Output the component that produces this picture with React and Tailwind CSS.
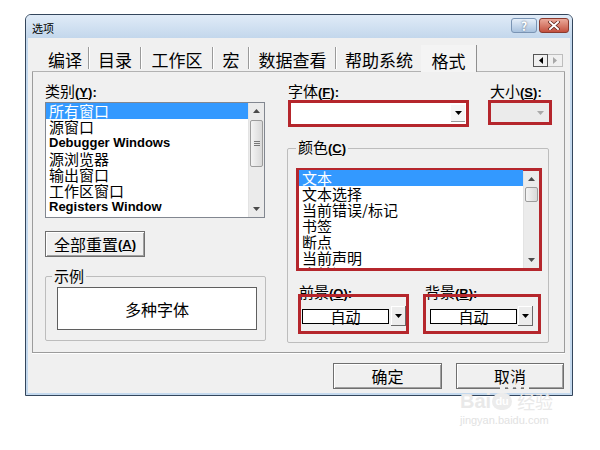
import React from 'react';

const cjk = "font-['Noto_Sans_CJK_SC','Liberation_Sans',sans-serif]";
const latinBold = "font-['Liberation_Sans',sans-serif] font-bold";

const Tri = ({ dir = 'down', color = '#000', w = 7, h = 4 }) => {
  const pts = {
    down: `0,0 ${w},0 ${w / 2},${h}`,
    up: `0,${h} ${w},${h} ${w / 2},0`,
  };
  if (dir === 'left' || dir === 'right') {
    const p = dir === 'left' ? `${h},0 ${h},${w} 0,${w / 2}` : `0,0 0,${w} ${h},${w / 2}`;
    return (
      <svg width={h} height={w} viewBox={`0 0 ${h} ${w}`}>
        <polygon points={p} fill={color} />
      </svg>
    );
  }
  return (
    <svg width={w} height={h} viewBox={`0 0 ${w} ${h}`}>
      <polygon points={pts[dir]} fill={color} />
    </svg>
  );
};

const ScrollBar = ({ thumbTop, thumbH, grip }) => (
  <div className="w-[16px] h-full flex flex-col bg-[#ebebeb] border-l border-[#e3e3e3]">
    <div className="h-[16px] flex items-center justify-center">
      <Tri dir="up" color="#4a4a4a" w={7} h={4} />
    </div>
    <div
      className={`mx-[1px] rounded-[2px] border border-[#9c9c9c] bg-linear-to-r from-[#f4f4f4] to-[#d9d9d9] flex flex-col items-center justify-center gap-[1px] ${thumbTop} ${thumbH}`}
    >
      {grip && (
        <>
          <div className="w-[6px] h-[1px] bg-[#777]" />
          <div className="w-[6px] h-[1px] bg-[#777]" />
          <div className="w-[6px] h-[1px] bg-[#777]" />
        </>
      )}
    </div>
    <div className="flex-1" />
    <div className="h-[16px] flex items-center justify-center">
      <Tri dir="down" color="#4a4a4a" w={7} h={4} />
    </div>
  </div>
);

const Row = ({ children, selected, bold }) => (
  <div
    className={`h-[16px] leading-[16px] pl-[3px] whitespace-nowrap overflow-hidden ${
      selected ? 'bg-[#3399ff] text-white' : 'text-black'
    } ${bold ? `${latinBold} text-[13px]` : 'text-[15px]'}`}
  >
    {children}
  </div>
);

const Key = ({ k, colon = true }) => (
  <span className={`${latinBold} text-[13px]`}>
    (<span className="underline">{k}</span>){colon ? ':' : ''}
  </span>
);

const Sep = () => (
  <div className="h-full flex items-end border-b border-[#b2b2b2]">
    <div className="flex mb-[2px] h-[22px]">
      <div className="w-[1px] bg-[#9a9a9a]" />
      <div className="w-[1px] bg-white" />
    </div>
  </div>
);

const Tab = ({ w, children, active }) => (
  <div
    className={`${w} h-full flex items-center justify-center pt-[3px] text-[17px] leading-none ${
      active ? 'border-r border-[#8f8f8f] bg-[#f4f4f4]' : 'border-b border-[#b2b2b2]'
    }`}
  >
    {children}
  </div>
);

const WinButton = ({ w, children }) => (
  <div
    className={`${w} h-[26px] border border-[#6f6f6f] bg-[#f0f0f0] shadow-[inset_1px_1px_0_#ffffff,inset_-1px_-1px_0_#a0a0a0] flex items-center justify-center text-[16px] leading-none`}
  >
    {children}
  </div>
);

const ColorCombo = ({ pl, ml }) => (
  <div className={`flex items-center h-full pt-[4px] ${pl}`}>
    <div className="w-[87px] h-[15px] border border-black bg-white flex items-center justify-center text-[15px] leading-none">
      自动
    </div>
    <div
      className={`${ml} w-[15px] h-[20px] bg-[#ececec] border-r border-b border-[#6a6a6a] shadow-[inset_1px_1px_0_#ffffff] flex items-center justify-center`}
    >
      <Tri color="#000" w={7} h={4} />
    </div>
  </div>
);

export default function App() {
  return (
    <div className={`w-[600px] h-[450px] bg-white relative overflow-hidden text-black ${cjk}`}>
      {/* dialog window */}
      <div className="ml-[25px] mt-[14px] w-[548px] h-[382px] border border-[#34465c] rounded-t-[6px] bg-[#c4d9ee] flex flex-col">
        {/* title bar */}
        <div className="h-[23px] flex items-start rounded-t-[5px] bg-linear-to-b from-[#e0ebf7] to-[#c3d7ec]">
          <div className="pl-[6px] h-full flex items-center pt-[3px] text-[11px] leading-none">选项</div>
          <div className="flex-1" />
          <div className="flex mt-[3px] mr-[3px] gap-[2px]">
            <div className="w-[26px] h-[15px] rounded-[3px] border border-[#7a94b4] bg-linear-to-b from-[#e6eff9] to-[#a9c2de] flex items-center justify-center text-[12px] leading-none font-bold text-white [text-shadow:0_0_2px_#4a5a70]">
              ?
            </div>
            <div className="w-[30px] h-[15px] rounded-[3px] border border-[#8a3a2e] bg-linear-to-b from-[#eaa99a] to-[#c24f3e] flex items-center justify-center">
              <svg width="12" height="9" viewBox="0 0 12 9">
                <path d="M2 1 L10 8 M10 1 L2 8" stroke="#5a1f16" strokeWidth="3.4" strokeLinecap="square" />
                <path d="M2 1 L10 8 M10 1 L2 8" stroke="#ffffff" strokeWidth="2" strokeLinecap="square" />
              </svg>
            </div>
          </div>
        </div>

        {/* client area */}
        <div className="mx-[2px] mb-[2px] flex-1 bg-[#f0f0f0] flex flex-col">
          <div className="ml-[4px] w-[533px] pt-[7px] flex flex-col">
            {/* tabs */}
            <div className="h-[27px] flex">
              <div className="w-[10px] border-b border-[#b2b2b2]" />
              <Tab w="w-[46px]">编译</Tab>
              <Sep />
              <Tab w="w-[50px]">目录</Tab>
              <Sep />
              <Tab w="w-[70px]">工作区</Tab>
              <Sep />
              <Tab w="w-[34px]">宏</Tab>
              <Sep />
              <Tab w="w-[85px]">数据查看</Tab>
              <Sep />
              <Tab w="w-[84px]">帮助系统</Tab>
              <Tab w="w-[56px]" active>
                格式
              </Tab>
              <div className="flex-1 border-b border-[#b2b2b2] flex items-end justify-end pb-[4px] pr-[2px]">
                <div className="w-[15px] h-[13px] border border-[#555] bg-[#f0f0f0] flex items-center justify-center">
                  <Tri dir="left" color="#000" w={7} h={4} />
                </div>
                <div className="w-[15px] h-[13px] border border-[#bdbdbd] border-l-0 bg-[#f0f0f0] flex items-center justify-center">
                  <Tri dir="right" color="#a8a8a8" w={7} h={4} />
                </div>
              </div>
            </div>

            {/* tab page */}
            <div className="h-[281px] border-l border-r border-b border-[#9c9c9c] shadow-[0_1px_0_#ffffff] flex pl-[12px] pt-[10px]">
              {/* left column */}
              <div className="w-[221px] flex flex-col">
                <div className="h-[18px] text-[15px] leading-[18px]">
                  类别<Key k="Y" />
                </div>
                <div className="mt-[2px] h-[116px] w-[220px] border border-[#828790] bg-white flex">
                  <div className="flex-1 overflow-hidden">
                    <Row selected>所有窗口</Row>
                    <Row>源窗口</Row>
                    <Row bold>Debugger Windows</Row>
                    <Row>源浏览器</Row>
                    <Row>输出窗口</Row>
                    <Row>工作区窗口</Row>
                    <Row bold>Registers Window</Row>
                  </div>
                  <ScrollBar thumbTop="mt-[1px]" thumbH="h-[47px]" grip />
                </div>
                <div className="mt-[13px]">
                  <WinButton w="w-[100px]">
                    全部重置<Key k="A" colon={false} />
                  </WinButton>
                </div>
                <fieldset className="mt-[11px] w-[221px] border border-[#bdbdbd] rounded-[2px] pb-[10px]">
                  <legend className="ml-[6px] px-[2px] text-[15px] leading-[16px]">示例</legend>
                  <div className="mt-[3px] ml-[11px] w-[200px] h-[43px] border border-[#5f5f5f] bg-white flex items-center justify-center text-[16px] leading-none">
                    多种字体
                  </div>
                </fieldset>
              </div>

              {/* right column */}
              <div className="ml-[21px] w-[265px] flex flex-col">
                <div className="flex">
                  <div className="ml-[1px] w-[181px] flex flex-col">
                    <div className="h-[18px] text-[15px] leading-[18px]">
                      字体<Key k="F" />
                    </div>
                    <div className="h-[27px] border-[3px] border-[#b5262c] bg-white flex justify-end items-start">
                      <div className="mt-[2px] mr-[1px] w-[14px] h-[17px] bg-[#f6f6f6] border-b border-[#9a9a9a] flex items-center justify-center">
                        <Tri color="#000" w={7} h={4} />
                      </div>
                    </div>
                  </div>
                  <div className="ml-[19px] w-[64px] flex flex-col">
                    <div className="h-[18px] pl-[2px] text-[15px] leading-[18px]">
                      大小<Key k="S" />
                    </div>
                    <div className="h-[25px] border-[3px] border-[#b5262c] bg-[#ebebeb] flex justify-end items-center pr-[5px]">
                      <Tri color="#a9a9a9" w={7} h={4} />
                    </div>
                  </div>
                </div>

                <fieldset className="mt-[12px] w-[262px] border border-[#bdbdbd] rounded-[2px] pb-[8px]">
                  <legend className="ml-[8px] px-[2px] text-[15px] leading-[16px]">
                    颜色<Key k="C" colon={false} />
                  </legend>
                  <div className="mt-[11px] ml-[8px] w-[246px] h-[103px] border-[3px] border-[#b5262c] bg-white flex">
                    <div className="flex-1 overflow-hidden -mt-[1px]">
                      <Row selected>文本</Row>
                      <Row>文本选择</Row>
                      <Row>当前错误/标记</Row>
                      <Row>书签</Row>
                      <Row>断点</Row>
                      <Row>当前声明</Row>
                      <Row>当前调用器</Row>
                    </div>
                    <ScrollBar thumbTop="mt-[0px]" thumbH="h-[15px]" />
                  </div>
                  <div className="mt-[13px] h-[16px] flex text-[15px] leading-[16px]">
                    <div className="ml-[11px] w-[126px]">
                      前景<Key k="O" />
                    </div>
                    <div>
                      背景<Key k="B" />
                    </div>
                  </div>
                  <div className="mt-[-6px] flex">
                    <div className="ml-[10px] w-[111px] h-[40px] border-[3px] border-[#b5262c]">
                      <ColorCombo pl="pl-[1px]" ml="ml-[2px]" />
                    </div>
                    <div className="ml-[14px] w-[118px] h-[40px] border-[3px] border-[#b5262c]">
                      <ColorCombo pl="pl-[4px]" ml="ml-[1px]" />
                    </div>
                  </div>
                </fieldset>
              </div>
            </div>

            {/* dialog buttons */}
            <div className="mt-[10px] flex justify-end gap-[14px] pr-[1px]">
              <WinButton w="w-[109px]">确定</WinButton>
              <WinButton w="w-[108px]">取消</WinButton>
            </div>
          </div>
        </div>
      </div>

      {/* watermark */}
      <div className="absolute left-[460px] top-[384px] flex flex-col items-start text-[#e9e9e9]">
        <div className="ml-[40px] flex gap-[3px]">
          <div className="w-[5px] h-[7px] rounded-full bg-[#efefef]" />
          <div className="w-[5px] h-[8px] rounded-full bg-[#efefef] -mt-[2px]" />
          <div className="w-[5px] h-[8px] rounded-full bg-[#efefef] -mt-[2px]" />
          <div className="w-[5px] h-[7px] rounded-full bg-[#efefef]" />
        </div>
        <div className="flex items-center h-[20px]">
          <span className="font-['Liberation_Sans',sans-serif] font-bold text-[20px] leading-none">Bai</span>
          <span className="ml-[1px] w-[20px] h-[17px] rounded-full bg-[#ececec] text-white font-['Liberation_Sans',sans-serif] font-bold text-[11px] leading-none flex items-center justify-center">
            du
          </span>
          <span className="ml-[5px] text-[18px] leading-none">经验</span>
        </div>
        <div className="mt-[4px] font-['Liberation_Sans',sans-serif] text-[11px] leading-none text-[#e2e2e2]">
          jingyan.baidu.com
        </div>
      </div>
    </div>
  );
}
